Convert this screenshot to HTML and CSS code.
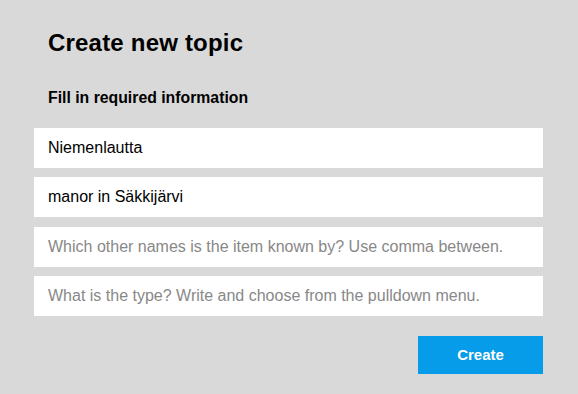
FILE: index.html
```html
<!DOCTYPE html>
<html lang="en">
<head>
<meta charset="utf-8">
<title>Create new topic</title>
<link rel="stylesheet" href="styles.css">
</head>
<body>
<main class="dialog">
  <h1 class="title">Create new topic</h1>
  <h2 class="subtitle">Fill in required information</h2>
  <form class="form">
    <input class="field" type="text" value="Niemenlautta">
    <input class="field" type="text" value="manor in Säkkijärvi">
    <input class="field" type="text" placeholder="Which other names is the item known by? Use comma between.">
    <input class="field" type="text" placeholder="What is the type? Write and choose from the pulldown menu.">
    <div class="actions">
      <button class="btn" type="button">Create</button>
    </div>
  </form>
</main>
</body>
</html>
```
FILE: styles.css
```css
html, body {
  margin: 0;
  padding: 0;
  background: #d9d9d9;
  height: 100%;
}
body {
  font-family: "Liberation Sans", Arial, sans-serif;
  color: #000;
}
.dialog {
  padding: 28px 35px 0 34px;
}
.title {
  margin: 0;
  padding-left: 14px;
  font-size: 24px;
  line-height: 30px;
  font-weight: bold;
  letter-spacing: 0.2px;
}
.subtitle {
  margin: 30px 0 0;
  padding-left: 14px;
  font-size: 15.8px;
  line-height: 20px;
  font-weight: bold;
}
.form {
  margin-top: 20px;
  display: flex;
  flex-direction: column;
  gap: 9.34px;
}
.field {
  display: block;
  box-sizing: border-box;
  width: 100%;
  height: 40px;
  margin: 0;
  border: 0;
  outline: none;
  background: #fff;
  padding: 0 14px;
  font-family: "Liberation Sans", Arial, sans-serif;
  font-size: 16px;
  color: #000;
}
.field::placeholder {
  color: #888;
  opacity: 1;
}
.actions {
  display: flex;
  justify-content: flex-end;
  margin-top: 10.66px;
}
.btn {
  width: 125px;
  height: 38px;
  border: 0;
  background: #069cea;
  color: #fff;
  font-family: "Liberation Sans", Arial, sans-serif;
  font-size: 15px;
  font-weight: bold;
  cursor: pointer;
}
```
